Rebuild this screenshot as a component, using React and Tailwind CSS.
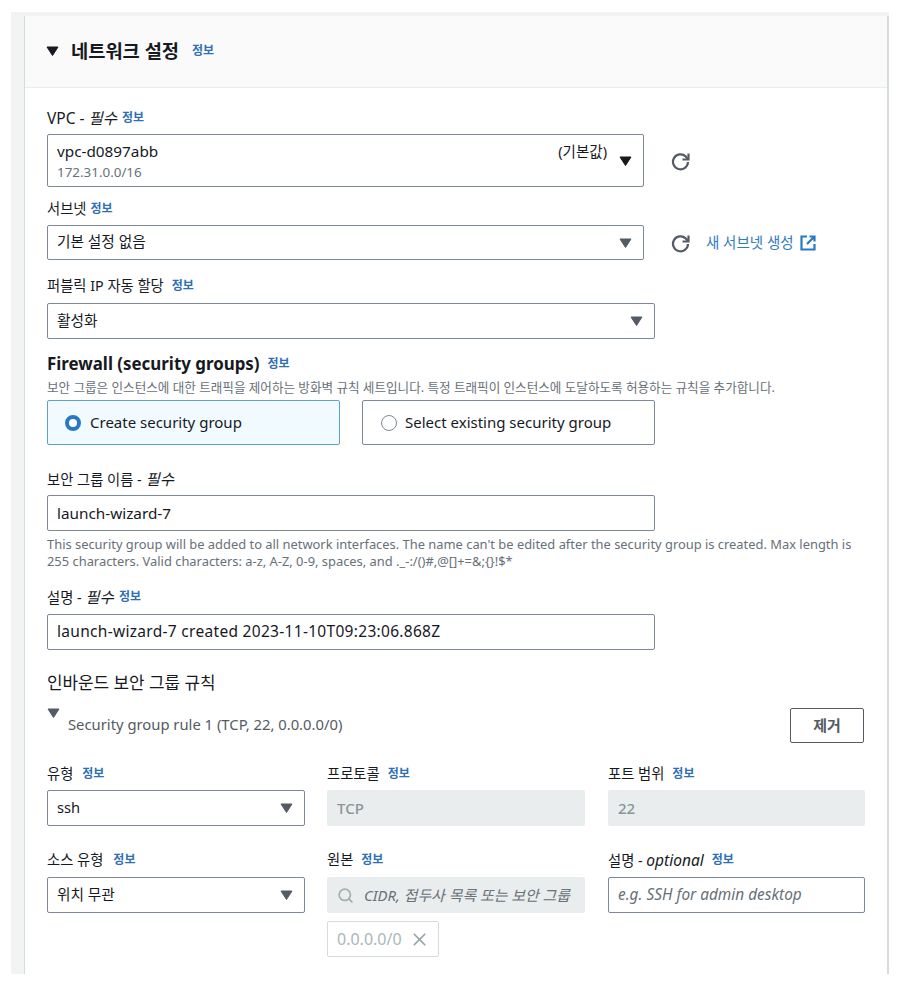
import { Search, X } from 'lucide-react';

function Caret({ className = 'text-[#545b64]' }) {
    return (
        <svg width="13" height="10" viewBox="0 0 13 10" className={className}>
            <path d="M1 1h11L6.500 9.500z" fill="currentColor" stroke="currentColor" strokeLinejoin="round" />
        </svg>
    );
}

function Refresh({ className = '' }) {
    return (
        <svg width="20" height="20" viewBox="0 0 20 20" fill="none" stroke="#545b64" strokeWidth="2.2" className={className}>
            <path d="M17 11a7.500 7.500 0 1 1-2.300-5.600L17 8" />
            <path d="M17.500 2.500V8.500H11.500" />
        </svg>
    );
}

function External() {
    return (
        <svg width="16" height="16" viewBox="0 0 16 16" fill="none" stroke="#2b78c2" strokeWidth="2.200" className="ml-[6px]">
            <path d="M7 1.500H1.500V14.500H14.500V9" />
            <path d="M9.500 1.500H14.500V6.500M14.500 1.500L7 9" />
        </svg>
    );
}

function Info({ className = '' }) {
    return <a className={`text-[12px] font-bold text-[#2f6fb3] ${className}`}>정보</a>;
}

function Label({ children, info = true, gap = 'ml-[5px]', className = '' }) {
    return (
        <div className={`flex h-[18px] items-center text-[14.300px] leading-[18px] text-[#16191f] ${className}`}>
            <span>{children}</span>
            {info && <Info className={gap} />}
        </div>
    );
}

function Select({ value, className = '' }) {
    return (
        <div className={`flex items-center justify-between rounded-[2px] border border-[#7d8998] bg-white pl-[9px] pr-[11px] text-[14.700px] text-[#16191f] ${className}`}>
            <span className="pb-[2px]">{value}</span>
            <Caret />
        </div>
    );
}

function TextBox({ children, className = '' }) {
    return (
        <div className={`flex h-[36px] items-center rounded-[2px] border border-[#7d8998] bg-white px-[9px] text-[#16191f] ${className}`}>
            {children}
        </div>
    );
}

function Disabled({ value }) {
    return (
        <div className="flex h-[36px] items-center rounded-[2px] bg-[#eaeded] px-[10px] text-[15px] font-medium text-[#879596]">
            {value}
        </div>
    );
}

export default function App() {
    return (
        <div className="h-[986px] w-[900px] bg-white pl-[11px] pr-[11px] pt-[12px] font-['Noto_Sans','Noto_Sans_CJK_KR',sans-serif]">
            <div className="h-[962px] bg-[#f2f3f3] pl-[13px] pt-[4px]">
                <div className="h-[958px] border-l border-r-2 border-[#d5dbdb] bg-white">
                    {/* Header */}
                    <div className="flex h-[72px] items-center border-b border-[#eaeded] bg-[#fafafa] pb-[1px] pl-[21px]">
                        <Caret className="text-[#16191f]" />
                        <h2 className="ml-[12px] text-[18.700px] font-bold text-[#16191f]">네트워크 설정</h2>
                        <Info className="ml-[13px]" />
                    </div>

                    <div className="pl-[22px] pt-[21px]">
                        <Label>
                            <span className="text-[15.500px]">VPC - </span>
                            <i className="text-[15.500px]">필수</i>
                        </Label>
                        <div className="mt-[7px] flex items-center">
                            <div className="flex h-[53px] w-[597px] rounded-[2px] border border-[#7d8998] bg-white pl-[9px] pr-[11px]">
                                <div className="flex-1 pt-[5px]">
                                    <div className="text-[15.300px] leading-[22px] text-[#16191f]">vpc-d0897abb</div>
                                    <div className="text-[13.400px] leading-[21px] text-[#687078]">172.31.0.0/16</div>
                                </div>
                                <span className="pt-[5px] text-[14.500px] leading-[22px] text-[#16191f]">(기본값)</span>
                                <span className="ml-[12px] flex items-center">
                                    <Caret className="text-[#16191f]" />
                                </span>
                            </div>
                            <Refresh className="ml-[27px]" />
                        </div>

                        <Label className="mt-[13px]" gap="ml-[4px]">서브넷</Label>
                        <div className="mt-[7px] flex items-center">
                            <Select value="기본 설정 없음" className="h-[35px] w-[597px]" />
                            <Refresh className="ml-[27px]" />
                            <a className="ml-[15px] flex items-center text-[14.500px] text-[#2f7bc1]">
                                새 서브넷 생성
                                <External />
                            </a>
                        </div>

                        <Label className="mt-[17px]" gap="ml-[8px]">퍼블릭 IP 자동 할당</Label>
                        <Select value="활성화" className="mt-[8px] h-[36px] w-[608px]" />

                        <div className="mt-[15px] flex h-[20px] items-center">
                            <h3 className="text-[16.900px] font-bold text-[#16191f]">Firewall (security groups)</h3>
                            <Info className="ml-[8px]" />
                        </div>
                        <p className="mt-[5px] h-[18px] whitespace-nowrap text-[12.600px] leading-[18px] text-[#687078]">
                            보안 그룹은 인스턴스에 대한 트래픽을 제어하는 방화벽 규칙 세트입니다. 특정 트래픽이 인스턴스에 도달하도록 허용하는 규칙을 추가합니다.
                        </p>
                        <div className="mt-[3px] flex w-[608px] justify-between">
                            <label className="flex h-[45px] w-[293px] items-center rounded-[2px] border border-[#5f9fd9] bg-[#f1faff] pl-[17px] text-[15px] text-[#16191f]">
                                <span className="h-[16px] w-[16px] rounded-full border-[4.500px] border-[#2b78c2] bg-white" />
                                <span className="ml-[9px]">Create security group</span>
                            </label>
                            <label className="flex h-[45px] w-[293px] items-center rounded-[2px] border border-[#7d8998] bg-white pl-[18px] text-[15px] text-[#16191f]">
                                <span className="h-[16px] w-[16px] rounded-full border border-[#7d8998] bg-white" />
                                <span className="ml-[8px]">Select existing security group</span>
                            </label>
                        </div>

                        <Label className="mt-[25px]" info={false}>
                            보안 그룹 이름 - <i className="text-[15.500px]">필수</i>
                        </Label>
                        <TextBox className="mt-[7px] w-[608px] text-[15.300px]">launch-wizard-7</TextBox>
                        <p className="mt-[5px] w-[815px] text-[12.900px] leading-[17px] text-[#687078]">
                            {"This security group will be added to all network interfaces. The name can't be edited after the security group is created. Max length is 255 characters. Valid characters: a-z, A-Z, 0-9, spaces, and ._-:/()#,@[]+=&;{}!$*"}
                        </p>

                        <Label className="mt-[18px]">
                            설명 - <i className="text-[15.500px]">필수</i>
                        </Label>
                        <TextBox className="mt-[8px] w-[608px] text-[15.500px] tracking-[0.3px]">
                            launch-wizard-7 created 2023-11-10T09:23:06.868Z
                        </TextBox>

                        <h3 className="mt-[22px] h-[22px] text-[16.900px] leading-[22px] text-[#16191f]">인바운드 보안 그룹 규칙</h3>

                        <div className="mt-[14px] flex w-[817px] items-start justify-between">
                            <div className="flex items-start">
                                <Caret />
                                <span className="ml-[8px] mt-[6px] text-[14.800px] leading-[20px] text-[#545b64]">
                                    Security group rule 1 (TCP, 22, 0.0.0.0/0)
                                </span>
                            </div>
                            <button className="flex h-[35px] w-[74px] items-center justify-center rounded-[2px] border border-[#545b64] bg-white text-[15px] font-bold text-[#545b64]">
                                제거
                            </button>
                        </div>

                        <div className="mt-[21px] grid w-[818px] grid-cols-[258px_258px_258px] gap-x-[22px]">
                            <div className="pt-[1px]">
                                <Label gap="ml-[9px]">유형</Label>
                                <Select value="ssh" className="mt-[7px] h-[36px]" />
                            </div>
                            <div className="pt-[1px]">
                                <Label gap="ml-2">프로토콜</Label>
                                <div className="mt-[7px]"><Disabled value="TCP" /></div>
                            </div>
                            <div className="pl-[1px] pt-[1px]">
                                <Label gap="ml-2">포트 범위</Label>
                                <div className="mt-[7px]"><Disabled value="22" /></div>
                            </div>

                            <div className="mt-[25px]">
                                <Label gap="ml-[10px]">소스 유형</Label>
                                <Select value="위치 무관" className="mt-[8px] h-[36px]" />
                            </div>
                            <div className="mt-[25px]">
                                <Label gap="ml-2">원본</Label>
                                <div className="mt-[8px] flex h-[36px] items-center rounded-[2px] bg-[#eaeded] pl-[10px] text-[14.900px] italic text-[#687078]">
                                    <Search size={17} strokeWidth={2.5} className="shrink-0 text-[#a3b0b1]" />
                                    <span className="ml-[10px] whitespace-nowrap">CIDR, 접두사 목록 또는 보안 그룹</span>
                                </div>
                                <div className="mt-[8px] flex h-[36px] w-[112px] items-center rounded-[2px] border border-[#d5dbdb] bg-white pl-[9px] text-[16px] text-[#aab7b8]">
                                    0.0.0.0/0
                                    <X size={21} strokeWidth={2} className="ml-[7px] text-[#95a5a6]" />
                                </div>
                            </div>
                            <div className="mt-[25px] pl-[1px]">
                                <Label gap="ml-2">
                                    설명 - <i className="text-[15.500px]">optional</i>
                                </Label>
                                <div className="mt-[8px] flex h-[36px] items-center rounded-[2px] border border-[#7d8998] bg-white px-[9px] text-[15.400px] italic text-[#687078]">
                                    e.g. SSH for admin desktop
                                </div>
                            </div>
                        </div>
                    </div>
                </div>
            </div>
        </div>
    );
}
